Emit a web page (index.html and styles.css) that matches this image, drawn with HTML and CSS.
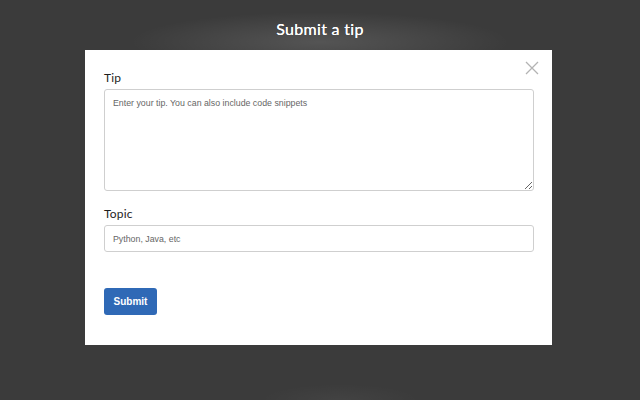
FILE: index.html
```html
<!DOCTYPE html>
<html>
<head>
<meta charset="utf-8">
<link rel="stylesheet" href="styles.css">
</head>
<body>
<div class="page">
  <h1 class="title">Submit a tip</h1>
  <div class="modal">
    <button class="close" aria-label="Close">
      <svg width="14" height="14" viewBox="0 0 14 14"><path d="M1 1L13 13M13 1L1 13" stroke="#b3b3b3" stroke-width="1.3" fill="none"/></svg>
    </button>
    <form class="form">
      <label class="label">Tip</label>
      <textarea class="area" placeholder="Enter your tip. You can also include code snippets"></textarea>
      <label class="label label-topic">Topic</label>
      <input class="input" type="text" placeholder="Python, Java, etc">
      <button class="submit" type="button">Submit</button>
    </form>
  </div>
</div>
</body>
</html>
```

FILE: styles.css
```css
html, body {
  margin: 0;
  padding: 0;
  height: 100%;
}
body {
  background: #3b3b3b;
  overflow: hidden;
}
.page {
  height: 400px;
  background:
    radial-gradient(ellipse 190px 30px at 320px 42px, rgba(255,255,255,0.13), rgba(255,255,255,0) 100%),
    radial-gradient(ellipse 80px 16px at 340px 400px, rgba(255,255,255,0.04), rgba(255,255,255,0) 100%),
    #3b3b3b;
  display: flex;
  flex-direction: column;
  padding-top: 19px;
  box-sizing: border-box;
}
.title {
  margin: 0;
  font-family: Lato, "Noto Sans", sans-serif;
  font-weight: 400;
  font-size: 16px;
  line-height: 20px;
  color: #ffffff;
  text-align: center;
  letter-spacing: 0.3px;
  text-shadow: 0 0 0.4px #fff;
}
.modal {
  position: relative;
  margin: 11px 0 0 85px;
  width: 467px;
  height: 295px;
  background: #ffffff;
  box-sizing: border-box;
  padding: 20px 18px 0 19px;
}
.close {
  position: absolute;
  top: 11px;
  right: 13px;
  border: 0;
  background: none;
  padding: 0;
  width: 14px;
  height: 14px;
  cursor: pointer;
}
.close svg { display: block; }
.form {
  display: flex;
  flex-direction: column;
  align-items: flex-start;
}
.label {
  font-family: Lato, "Noto Sans", sans-serif;
  font-size: 12px;
  line-height: 16px;
  color: #1e1e1e;
  margin-bottom: 3px;
  letter-spacing: 0.2px;
}
.label-topic {
  margin-top: 15px;
}
.area, .input {
  width: 430px;
  box-sizing: border-box;
  border: 1px solid #cfcfcf;
  border-radius: 3px;
  font-family: "Liberation Sans", Arial, sans-serif;
  font-size: 8.8px;
  color: #333;
  padding: 0 8px;
  margin: 0;
  outline: none;
}
.area {
  height: 102px;
  padding-top: 8px;
  resize: vertical;
}
.input {
  height: 27px;
}
.area::placeholder, .input::placeholder {
  color: #666666;
}
.submit {
  margin-top: 36px;
  width: 53px;
  height: 27px;
  border: 0;
  border-radius: 3px;
  background: #2f69b6;
  color: #ffffff;
  font-family: "Liberation Sans", Arial, sans-serif;
  font-weight: 700;
  font-size: 10px;
  padding: 0;
}
```
